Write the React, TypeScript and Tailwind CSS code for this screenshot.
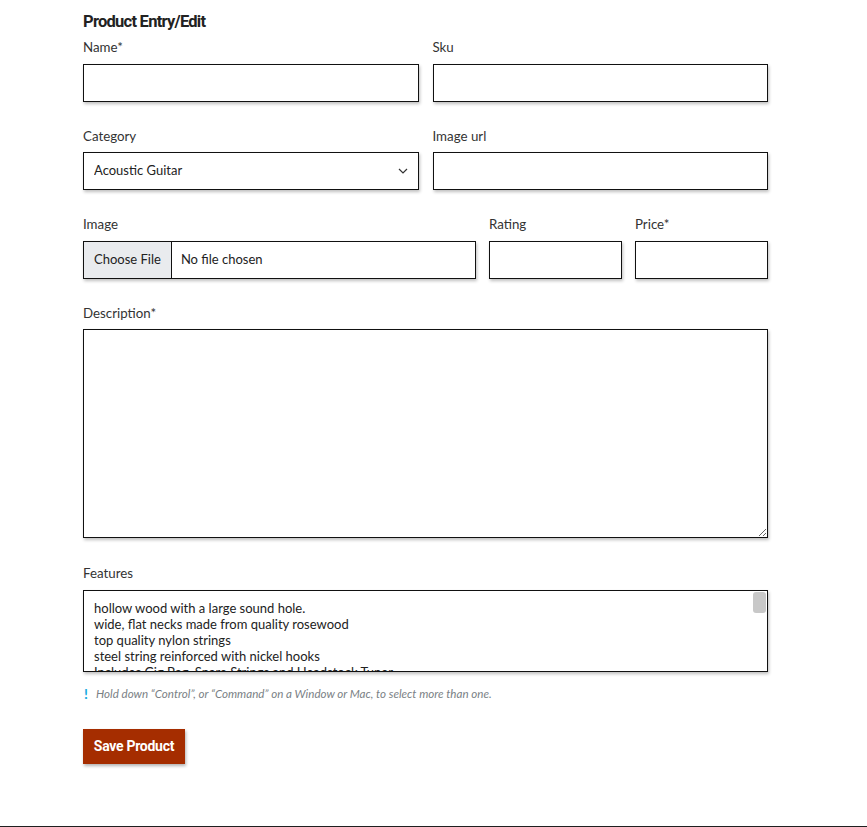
import { useState } from "react";

const features = [
  "hollow wood with a large sound hole.",
  "wide, flat necks made from quality rosewood",
  "top quality nylon strings",
  "steel string reinforced with nickel hooks",
  "Includes Gig Bag, Spare Strings and Headstock Tuner",
];

const boxCls =
  "block w-full border border-[#111] bg-white shadow-[1px_2px_3px_rgba(0,0,0,0.25)] outline-none";

function Label({ children }: { children: React.ReactNode }) {
  return <label className="block text-[13.3px] leading-[20px] text-[#333] mb-[6.5px]">{children}</label>;
}

function ChevronDown() {
  return (
    <svg width="10" height="6" viewBox="0 0 10 6" className="absolute right-[11px] top-[16px] pointer-events-none">
      <path d="M1 1l4 4 4-4" fill="none" stroke="#333" strokeWidth="1.2" />
    </svg>
  );
}

export default function App() {
  const [category, setCategory] = useState("Acoustic Guitar");

  return (
    <div className="min-h-screen bg-white flex flex-col" style={{ fontFamily: "Lato, 'Open Sans', sans-serif" }}>
      <main className="w-[685px] ml-[83px] pt-[10px] h-[817px]">
        <h1
          className="text-[16.5px] leading-[24px] font-bold text-[#222] tracking-[-0.045em] mb-[3px]"
          style={{ fontFamily: "Roboto, sans-serif" }}
        >
          Product Entry/Edit
        </h1>

        {/* name / sku */}
        <div className="grid grid-cols-2 gap-x-[14px] mb-[24px]">
          <div>
            <Label>Name*</Label>
            <input className={`${boxCls} h-[38px] px-[10px] text-[13px]`} />
          </div>
          <div>
            <Label>Sku</Label>
            <input className={`${boxCls} h-[38px] px-[10px] text-[13px]`} />
          </div>
        </div>

        {/* category / image url */}
        <div className="grid grid-cols-2 gap-x-[14px] mb-[24px]">
          <div>
            <Label>Category</Label>
            <div className="relative">
              <select
                value={category}
                onChange={(e) => setCategory(e.target.value)}
                className={`${boxCls} h-[38px] pl-[10px] pr-[30px] text-[13px] text-[#222] appearance-none rounded-none`}
              >
                <option>Acoustic Guitar</option>
                <option>Electric Guitar</option>
                <option>Bass Guitar</option>
                <option>Accessories</option>
              </select>
              <ChevronDown />
            </div>
          </div>
          <div>
            <Label>Image url</Label>
            <input className={`${boxCls} h-[38px] px-[10px] text-[13px]`} />
          </div>
        </div>

        {/* image / rating / price */}
        <div className="grid grid-cols-[1fr_133px_133px] gap-x-[13px] mb-[24px]">
          <div>
            <Label>Image</Label>
            <label className={`${boxCls} h-[38px] flex items-stretch text-[13px] text-[#222] cursor-pointer`}>
              <span className="bg-[#e9ebee] px-[10px] flex items-center border-r border-[#111]">Choose File</span>
              <span className="flex items-center pl-[9px]">No file chosen</span>
              <input type="file" className="hidden" />
            </label>
          </div>
          <div>
            <Label>Rating</Label>
            <input className={`${boxCls} h-[38px] px-[10px] text-[13px]`} />
          </div>
          <div>
            <Label>Price*</Label>
            <input className={`${boxCls} h-[38px] px-[10px] text-[13px]`} />
          </div>
        </div>

        {/* description */}
        <div className="mb-[25px]">
          <Label>Description*</Label>
          <textarea className={`${boxCls} h-[209px] px-[10px] py-[6px] text-[13px]`} />
        </div>

        {/* features */}
        <div>
          <Label>Features</Label>
          <div className={`${boxCls} relative h-[82px] overflow-hidden pl-[10px] pt-[9px] text-[13px] leading-[16px] text-[#222]`}>
            {features.map((f) => (
              <div key={f}>{f}</div>
            ))}
            <div className="absolute right-[1px] top-[1px] w-[13px] h-[21px] rounded-[3px] bg-[#c8c8c8]" />
          </div>
          <p className="mt-[14px] text-[11.6px] leading-[16px] italic text-[#7a7f85] flex items-center">
            <span className="not-italic font-bold text-[#17a9e0] text-[14px] w-[12px] ml-[1px]">!</span>
            Hold down “Control”, or “Command” on a Window or Mac, to select more than one.
          </p>
        </div>

        <button
          className="mt-[27px] h-[35px] w-[102px] bg-[#a52d00] text-white text-[14px] font-bold tracking-[-0.02em] shadow-[1px_2px_3px_rgba(0,0,0,0.3)]"
          style={{ fontFamily: "Roboto, sans-serif" }}
        >
          Save Product
        </button>
      </main>
      <footer className="h-[60px] bg-[#1f1f1f] mt-[9px]" />
    </div>
  );
}
